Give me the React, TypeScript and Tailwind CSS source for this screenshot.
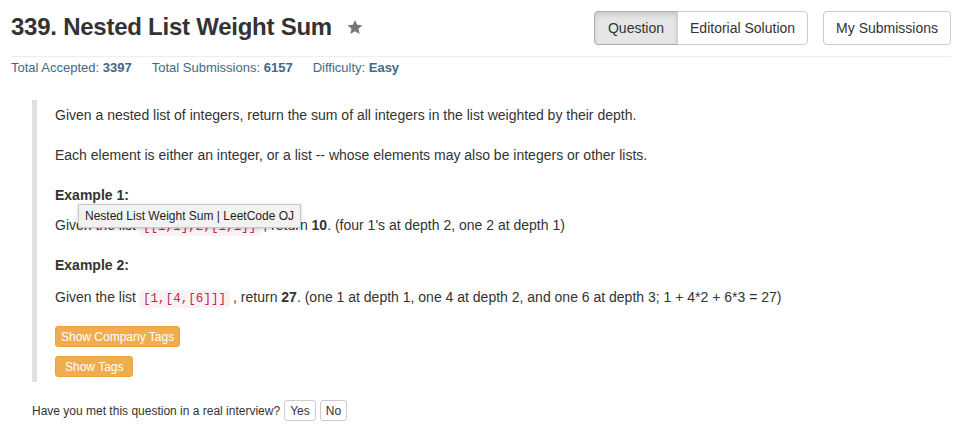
import React from 'react';

const Code = ({ children }: { children: React.ReactNode }) => (
  <code className="mx-[3px] rounded-[4px] bg-[#f9f2f4] px-[4px] py-[2px] font-['Liberation_Mono',monospace] text-[12.6px] leading-none text-[#c7254e]">
    {children}
  </code>
);

const App = () => {
  return (
    <div className="relative h-[426px] w-[970px] bg-white font-['Liberation_Sans',Arial,sans-serif] text-[#333]">
      <div className="px-[11px] pr-[19px]">
        {/* header */}
        <div className="flex h-[57px] items-start border-b border-[#eee] pt-[11px]">
          <h1 className="mt-[2px] flex items-center text-[24px] font-bold leading-[28px] tracking-[-0.25px] text-[#333]">
            339. Nested List Weight Sum
            <svg viewBox="0 0 24 24" className="ml-[14px] h-[18px] w-[18px] fill-[#777]">
              <path d="M12 2.5l2.9 6.6 7.1.6-5.4 4.7 1.6 7-6.2-3.8-6.2 3.8 1.6-7L2 9.7l7.1-.6z" />
            </svg>
          </h1>
          <div className="ml-auto flex gap-[15px]">
            <div className="flex h-[34px] text-[14px]">
              <button className="rounded-l-[4px] border border-[#adadad] bg-[#e6e6e6] px-[13px] shadow-[inset_0_3px_5px_rgba(0,0,0,0.125)]">
                Question
              </button>
              <button className="-ml-px rounded-r-[4px] border border-[#ccc] bg-white px-[12px]">Editorial Solution</button>
            </div>
            <button className="h-[34px] rounded-[4px] border border-[#ccc] bg-white px-[12px] text-[14px]">
              My Submissions
            </button>
          </div>
        </div>

        {/* stats */}
        <div className="mt-[1px] flex text-[13px] leading-[20px] text-[#3d6a88]">
          <span>
            Total Accepted: <b>3397</b>
          </span>
          <span className="ml-[20px]">
            Total Submissions: <b>6157</b>
          </span>
          <span className="ml-[20px]">
            Difficulty: <b>Easy</b>
          </span>
        </div>

        {/* question */}
        <div className="ml-[21px] mt-[22px] border-l-[5px] border-[#e0e0e0] pb-[5px] pl-[18px] pt-[5px] text-[14px] leading-[20px]">
          <p className="mb-[20px]">
            Given a nested list of integers, return the sum of all integers in the list weighted by their depth.
          </p>
          <p className="mb-[20px]">
            Each element is either an integer, or a list -- whose elements may also be integers or other lists.
          </p>
          <p className="mb-[10px] font-bold">Example 1:</p>
          <p className="mb-[20px]">
            Given the list<Code>[[1,1],2,[1,1]]</Code>, return <b>10</b>. (four 1's at depth 2, one 2 at depth 1)
          </p>
          <p className="mb-[10px] font-bold">Example 2:</p>
          <p className="mb-[17px] leading-[24px]">
            Given the list<Code>[1,[4,[6]]]</Code>, return <b>27</b>. (one 1 at depth 1, one 4 at depth 2, and one 6 at depth
            3; 1 + 4*2 + 6*3 = 27)
          </p>
          <div className="flex flex-col items-start gap-[9px]">
            <button className="h-[21px] rounded-[3px] border border-[#eea236] bg-[#f0ad4e] px-[5px] text-[12px] text-white">
              Show Company Tags
            </button>
            <button className="h-[21px] rounded-[3px] border border-[#eea236] bg-[#f0ad4e] px-[9px] text-[12px] text-white">
              Show Tags
            </button>
          </div>
        </div>

        {/* interview */}
        <div className="ml-[21px] mt-[18px] flex items-center gap-[4px] text-[12px]">
          <span>Have you met this question in a real interview?</span>
          <button className="h-[21px] rounded-[3px] border border-[#ccc] bg-white px-[5px]">Yes</button>
          <button className="h-[21px] rounded-[3px] border border-[#ccc] bg-white px-[5px]">No</button>
        </div>
      </div>

      {/* native title tooltip */}
      <div className="absolute left-[78px] top-[204px] border border-[#c8c8c8] bg-[#f2f2f2] px-[6px] py-[4px] text-[12px] leading-[14px] text-[#222] shadow-[0_1px_3px_rgba(0,0,0,0.2)]">
        Nested List Weight Sum | LeetCode OJ
      </div>
    </div>
  );
};

export default App;
